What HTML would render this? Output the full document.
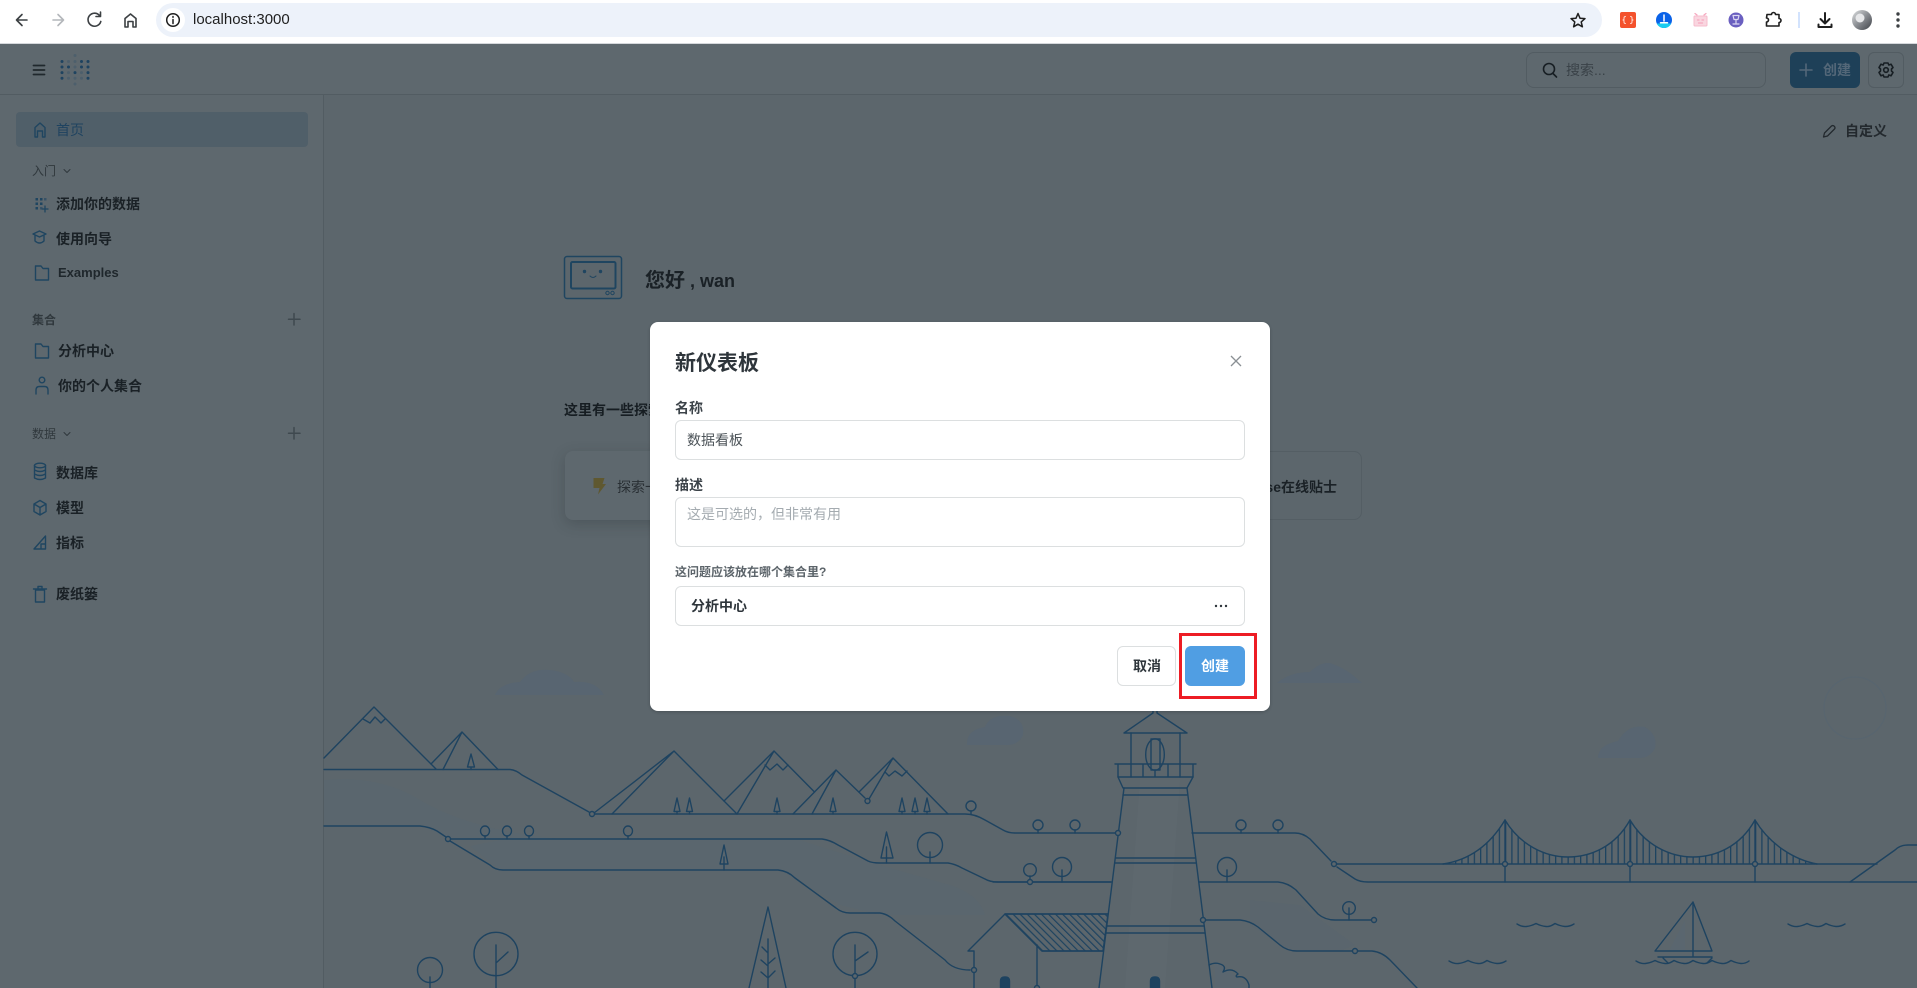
<!DOCTYPE html>
<html lang="zh"><head><meta charset="utf-8"><title>Metabase</title>
<style>
html,body{margin:0;padding:0;width:1917px;height:988px;overflow:hidden;background:#5c666c}
body{font-family:"Liberation Sans","Noto Sans CJK SC",sans-serif;position:relative}
.t{position:absolute;white-space:nowrap;line-height:20px;font-size:14px}
.b{font-weight:700}
.box{position:absolute;box-sizing:border-box}
svg{position:absolute;left:0;top:0}
</style></head><body>
<!-- page regions -->
<div class="box" style="left:0;top:44px;width:1917px;height:51px;background:#5e686e;border-bottom:1px solid #525c62"></div>
<div class="box" style="left:0;top:95px;width:324px;height:893px;background:#5e686e;border-right:1px solid #525c62"></div>
<div class="box" style="left:565px;top:451px;width:400px;height:69px;background:#5e686e;border-radius:8px;box-shadow:0 4px 14px rgba(30,38,44,.25)"></div>
<div class="box" style="left:975px;top:451px;width:387px;height:69px;border:1px solid #545e64;border-radius:8px"></div>

<!-- chrome -->
<div class="box" style="left:0;top:0;width:1917px;height:44px;background:#fff;border-bottom:1px solid #d5d8dc"></div>
<div class="box" style="left:156px;top:3px;width:1446px;height:34px;background:#edf2fa;border-radius:17px"></div>
<div class="box" style="left:161px;top:8px;width:24px;height:24px;background:#fff;border-radius:50%"></div>
<div class="t" style="left:193px;top:10px;color:#1f1f1f;font-size:15px">localhost:3000</div>

<!-- header -->
<div class="box" style="left:1526px;top:52px;width:240px;height:36px;border:1px solid #525c62;border-radius:8px"></div>
<div class="t" style="left:1566px;top:60px;color:#3a4248">搜索...</div>
<div class="box" style="left:1790px;top:52px;width:70px;height:36px;background:#1e4058;border-radius:6px"></div>
<div class="t b" style="left:1823px;top:60px;color:#536778">创建</div>
<div class="box" style="left:1868px;top:52px;width:36px;height:36px;border:1px solid #525c62;border-radius:6px"></div>
<div class="t b" style="left:1845px;top:121px;color:#23292e">自定义</div>

<!-- sidebar -->
<div class="box" style="left:16px;top:112px;width:292px;height:35px;background:#505f69;border-radius:4px"></div>
<div class="t" style="left:56px;top:120px;color:#1f4360">首页</div>
<div class="t" style="left:32px;top:161px;font-size:12px;color:#30383d">入门</div>
<div class="t b" style="left:56px;top:194px;color:#1a2126">添加你的数据</div>
<div class="t b" style="left:56px;top:229px;color:#1a2126">使用向导</div>
<div class="t b" style="left:58px;top:263px;color:#1f272c;font-size:13px">Examples</div>
<div class="t b" style="left:32px;top:310px;font-size:12px;color:#30383d">集合</div>
<div class="t b" style="left:58px;top:341px;color:#1a2126">分析中心</div>
<div class="t b" style="left:58px;top:376px;color:#1a2126">你的个人集合</div>
<div class="t" style="left:32px;top:424px;font-size:12px;color:#30383d">数据</div>
<div class="t b" style="left:56px;top:463px;color:#1a2126">数据库</div>
<div class="t b" style="left:56px;top:498px;color:#1a2126">模型</div>
<div class="t b" style="left:56px;top:533px;color:#1a2126">指标</div>
<div class="t b" style="left:56px;top:584px;color:#1a2126">废纸篓</div>

<!-- main -->
<div class="t b" style="left:645px;top:271px;font-size:20px;color:#1a2126">您好<span style="font-size:18px"> , wan</span></div>
<div class="t b" style="left:564px;top:400px;color:#161d22">这里有一些探索</div>
<div class="t" style="left:617px;top:477px;color:#292f34">探索一下</div>
<div class="t b" style="right:580px;top:477px;color:#1a2126;clip-path:inset(0 0 0 20px)">bhse在线贴士</div>

<svg width="1917" height="988" viewBox="0 0 1917 988" fill="none" stroke-linecap="round" stroke-linejoin="round">
<defs>
<pattern id="hang" patternUnits="userSpaceOnUse" x="1505" y="0" width="6.25" height="40"><rect x="0" y="0" width="1.3" height="40" fill="#1e4360"/></pattern>
<pattern id="hatch" patternUnits="userSpaceOnUse" width="5" height="5" patternTransform="rotate(-45 1005 914)"><rect x="0" y="0" width="1.2" height="5" fill="#1e4360"/></pattern>
<linearGradient id="av" x1="0" y1="0" x2="1" y2="1"><stop offset="0" stop-color="#dfe1e3"/><stop offset=".5" stop-color="#8a8d92"/><stop offset="1" stop-color="#3e4147"/></linearGradient>
</defs>

<!-- chrome icons -->
<g stroke="#3c4043" stroke-width="1.600">
<path d="M27 20H16.500M22 14.500L16.500 20L22 25.500"/>
<path d="M53 20H63.500M58 14.500L63.500 20L58 25.500" stroke="#b4b7bb"/>
<path d="M99.500 15.500A6.500 6.500 0 1 0 100.800 21.500M100.500 12V16.500H96"/>
<path d="M125 27V18.500L130.500 14L136 18.500V27H133V21.500H128V27Z"/>
<circle cx="173" cy="20" r="6.300" stroke="#1f1f1f" stroke-width="1.500"/>
<path d="M173 19.500V23.500M173 16.500V17.200" stroke="#1f1f1f" stroke-width="1.500"/>
<path d="M1578 13.500L1580 18.200L1585 18.600L1581.200 21.900L1582.400 26.800L1578 24.200L1573.600 26.800L1574.800 21.900L1571 18.600L1576 18.200Z" stroke="#1f1f1f" stroke-width="1.500"/>
<path d="M1767 14.500H1771.500A2 2 0 0 1 1775.500 14.500H1779V18.500A2 2 0 0 1 1779 22.500V26H1766.500V22A2 2 0 0 0 1766.500 18Z" stroke="#1f1f1f"/>
<path d="M1825 13V23M1820.500 19L1825 23.500L1829.500 19M1818.500 24.500V27H1831.500V24.500" stroke="#1f1f1f" stroke-width="2"/>
</g>
<rect x="1620" y="12" width="16" height="16" rx="2" fill="#f4522d"/>
<path d="M1625.500 16.500Q1624 16.500 1624 18V19.500L1623 20L1624 20.500V22Q1624 23.500 1625.500 23.500M1630.500 16.500Q1632 16.500 1632 18V19.500L1633 20L1632 20.500V22Q1632 23.500 1630.500 23.500" stroke="#ffd9cf"/>
<circle cx="1664" cy="20" r="8" fill="#0a62e8"/><path d="M1656.800 23.500A8 8 0 0 0 1671.200 23.500Z" fill="#19cdf0"/>
<path d="M1664 15V21M1660.500 22.800H1667.500" stroke="#fff" stroke-width="1.500"/>
<rect x="1694" y="16" width="13" height="10" rx="1" fill="#f9d6e0" stroke="#f6bccd"/><path d="M1697 15L1695 13.500M1704 15L1706 13.500M1697.500 20H1699M1702 20H1703.500M1698.500 23H1702.500" stroke="#f6a8bf" stroke-width="1.300"/>
<circle cx="1736" cy="20" r="7.500" fill="#6a5fc0"/><path d="M1733 15.500H1739L1738 19.500H1734ZM1736 20V23M1733 24H1739" stroke="#dcd8f2" stroke-width="1.200"/>
<rect x="1798" y="12" width="2" height="16" fill="#d3e3fd"/>
<circle cx="1862" cy="20" r="10" fill="url(#av)"/>
<circle cx="1860" cy="18" r="4.500" fill="#e6e7e9"/>
<g fill="#3c4043"><circle cx="1898" cy="14" r="1.700"/><circle cx="1898" cy="20" r="1.700"/><circle cx="1898" cy="26" r="1.700"/></g>

<!-- header left -->
<path d="M33.500 65.500H44.500M33.500 70H44.500M33.500 74.500H44.500" stroke="#20282d" stroke-width="1.800"/>
<g fill="#1e4360">
<circle cx="62" cy="61.500" r="1.500"/><circle cx="62" cy="67" r="1.500"/><circle cx="62" cy="72.600" r="1.500"/><circle cx="62" cy="78.300" r="1.500"/>
<circle cx="88" cy="61.500" r="1.500"/><circle cx="88" cy="67" r="1.500"/><circle cx="88" cy="72.600" r="1.500"/><circle cx="88" cy="78.300" r="1.500"/>
<circle cx="68.500" cy="67" r="1.500"/><circle cx="81.500" cy="67" r="1.500"/><circle cx="75" cy="72.600" r="1.500"/><circle cx="81.500" cy="61.500" r="1.500"/>
</g>
<g fill="#4d5f6c">
<circle cx="75" cy="55.500" r="1.500"/><circle cx="75" cy="61.500" r="1.500"/><circle cx="68.500" cy="61.500" r="1.500"/><circle cx="75" cy="67" r="1.500"/>
<circle cx="68.500" cy="72.600" r="1.500"/><circle cx="81.500" cy="72.600" r="1.500"/><circle cx="68.500" cy="78.300" r="1.500"/><circle cx="75" cy="78.300" r="1.500"/><circle cx="81.500" cy="78.300" r="1.500"/><circle cx="75" cy="84" r="1.500"/>
</g>

<!-- header right -->
<circle cx="1549" cy="69" r="5.500" stroke="#171e23" stroke-width="1.600"/><path d="M1553 73.500L1556.500 77" stroke="#171e23" stroke-width="1.600"/>
<path d="M1806 64V76M1800 70H1812" stroke="#536778" stroke-width="1.600"/>
<path d="M1884 63H1888L1888.800 65L1891 64.200L1893 67.500L1891.500 69V71L1893 72.500L1891 75.800L1888.800 75L1888 77H1884L1883.200 75L1881 75.800L1879 72.500L1880.500 71V69L1879 67.500L1881 64.200L1883.200 65Z" stroke="#171e23" stroke-width="1.600"/><circle cx="1886" cy="70" r="2.300" stroke="#171e23" stroke-width="1.600"/>
<path d="M1823.500 137L1824.500 133L1831.500 126Q1833 125 1834.500 126.500Q1835.500 128 1834.500 129L1827.500 136Z" stroke="#23292e" stroke-width="1.300"/>

<!-- sidebar icons -->
<g stroke="#1f4560" stroke-width="1.400">
<path d="M35 137V127.500L40 123L45 127.500V137H42.500V131H37.500V137Z"/>
<path d="M64 169.500L67 172.500L70 169.500" stroke="#30383d" stroke-width="1"/>
<path d="M64 432.500L67 435.500L70 432.500" stroke="#30383d" stroke-width="1"/>
<path d="M45 206V212M42 209H48" stroke-width="1.300"/>
<path d="M33 234L39.500 231L46 234L39.500 237ZM35 236V241Q39.500 245 44 241V236"/>
<path d="M35.500 266H41L43 268.500H48.500V280H35.500Z"/>
<path d="M35.500 344H41L43 346.500H48.500V358H35.500Z"/>
<circle cx="42" cy="380" r="2.800"/><path d="M36 394V390Q36 386.500 39.500 386.500H44.500Q48 386.500 48 390V394"/>
<ellipse cx="40" cy="465.500" rx="5.500" ry="2.300"/><path d="M34.500 465.500V478Q40 481 45.500 478V465.500M34.500 470Q40 473 45.500 470M34.500 474Q40 477 45.500 474"/>
<path d="M40 500.500L46 504V511.500L40 515L34 511.500V504ZM34 504L40 507.500L46 504M40 507.500V515"/>
<path d="M45.500 536V549H34ZM41 549V544H45.500"/>
<path d="M35.500 590H44.500V602H35.500ZM33.500 589H46.500M38 589V586.500H42V589"/>
</g>
<g fill="#1f4560">
<rect x="35.500" y="198" width="2.500" height="2.500"/><rect x="40" y="198" width="2.500" height="2.500"/><rect x="44" y="198" width="2.500" height="2.500" opacity=".6"/>
<rect x="35.500" y="202.500" width="2.500" height="2.500"/><rect x="40" y="202.500" width="2.500" height="2.500"/>
<rect x="35.500" y="207" width="2.500" height="2.500"/><rect x="40" y="207" width="2.500" height="2.500" opacity=".6"/>
</g>
<path d="M294 313.500V325M288.500 319.300H300M294 427.500V439M288.500 433.300H300" stroke="#3f494f" stroke-width="1.500"/>

<!-- greeting icon -->
<g stroke="#1f4560" stroke-width="1.500">
<rect x="564.500" y="256.500" width="57" height="42" rx="2.500"/>
<rect x="571" y="262" width="44.500" height="26.500" rx="1.500" stroke-width="2"/>
<path d="M590 276Q593 279 596 276" stroke-width="1"/>
<circle cx="607.500" cy="293" r="1.700" stroke-width="1"/><circle cx="612.500" cy="293" r="1.700" stroke-width="1"/>
</g>
<circle cx="584.500" cy="271.500" r="1.700" fill="#1f4560"/><circle cx="600.500" cy="271.500" r="1.700" fill="#1f4560"/>
<path d="M593.500 478H604.500L602.500 484H606L598 494.500L599.500 488H593.500Z" fill="#5f5830"/>

<!-- illustration: faint -->
<g fill="#586571" stroke="none">
<path d="M495 695Q500 683 520 682Q530 668 550 670Q568 672 574 682Q596 680 604 695Z"/>
<path d="M967 745Q966 730 985 727Q990 714 1010 716Q1025 720 1023 735Q1018 746 1005 745Z"/>
<path d="M1277 683Q1290 672 1310 672Q1320 662 1330 663Q1345 668 1355 677L1362 683Z"/>
<path d="M1598 758Q1598 745 1618 741Q1628 724 1645 727Q1658 735 1655 748Q1650 758 1640 758Z"/>
<path d="M324 780Q380 775 420 800Q470 830 560 839H448L423 826H324Z" opacity=".45"/>
<path d="M500 840H800Q860 860 950 885Q980 895 985 915H880L840 905L780 870H500L470 846Z" opacity=".45"/>
<path d="M1140 780H1180L1165 988H1125Z" opacity=".4" fill="#626c72"/>
<path d="M1215 960L1250 988H1215Z" opacity=".6"/>
<path d="M1250 900L1300 905L1355 945L1340 951H1290L1250 925Z" opacity=".4"/>
<path d="M1669 951L1685 920V951Z" opacity=".6"/>
</g>
<circle cx="1855" cy="708" r="31" stroke="#58656f" stroke-width="1.200"/>

<!-- illustration lines -->
<g stroke="#1e4360" stroke-width="1.400">
<!-- line 1 -->
<path d="M324 769.500H510Q516 770 522 775L589 812"/>
<path d="M324 758L374 707L436 769M363 719L370 723L375 717L381 723L385 719"/>
<path d="M431 764L462 732L498 769.500M462 732L443 769.500"/>
<path d="M471 754L467.500 767H474.500ZM471 767V769.500"/>
<!-- line 2 -->
<path d="M595 814H965Q975 814 985 820L1003 830Q1008 833 1015 833H1115"/>
<path d="M594 813L674 751L737 814M674 751L612 814"/>
<path d="M724 801L774 751L814.500 792M774 751L737 814"/>
<path d="M765 765L770 770L777 764L783 770L788 765"/>
<path d="M793 814L836 770L865 798M836 770L812 814"/>
<path d="M859 792L893 758L948 814M893 758L869 799"/>
<path d="M885 772L889 776L895 771L902 776L907 771"/>
<g>
<path d="M677 798L674 811.500H680ZM677 811.500V814"/>
<path d="M689.500 798L686.500 811.500H692.500ZM689.500 811.500V814"/>
<path d="M777 798L774 811.500H780ZM777 811.500V814"/>
<path d="M833 798L830 811.500H836ZM833 811.500V814"/>
<path d="M902 798L899 811.500H905ZM902 811.500V814"/>
<path d="M915 798L912 811.500H918ZM915 811.500V814"/>
<path d="M927 798L924 811.500H930ZM927 811.500V814"/>
</g>
<circle cx="971" cy="806" r="5"/><path d="M971 811V814"/>
<circle cx="1038" cy="825" r="5"/><path d="M1038 830V833"/>
<circle cx="1075" cy="825" r="5"/><path d="M1075 830V833"/>
<!-- line 3 -->
<path d="M324 826H420Q430 827 437 831L446 837"/>
<path d="M451 839H822Q830 840 838 845L868 861Q872 863 880 863H948Q955 864 962 868L985 879Q990 882 998 882H1111"/>
<ellipse cx="485" cy="831" rx="4.500" ry="5"/><path d="M485 836V839"/>
<ellipse cx="507" cy="831" rx="4.500" ry="5"/><path d="M507 836V839"/>
<ellipse cx="529" cy="831" rx="4.500" ry="5"/><path d="M529 836V839"/>
<ellipse cx="628" cy="831" rx="4.500" ry="5"/><path d="M628 836V839"/>
<path d="M886.500 832L881 858H893ZM886.500 847V863"/>
<circle cx="930" cy="845" r="12.500"/><path d="M930 852V863"/>
<!-- line 4 -->
<path d="M450 841L490 865Q495 870 503 870H778Q788 871 795 878L836 908Q842 913 850 913H880Q888 914 895 921L945 960Q953 970 970 970"/>
<path d="M724 845L720 864H728ZM724 857V870"/>
<!-- bottom-left trees -->
<ellipse cx="430" cy="970" rx="12.500" ry="12.500"/><path d="M430 977V988"/>
<ellipse cx="496" cy="954" rx="22" ry="21.700"/><path d="M496 945V988M496 963L508 952"/>
<path d="M749 988L768 907L786 988M768 939V988M768 953L762 947M768 966L761 960M768 978L761 972M768 964L775 958M768 978L775 971"/>
<ellipse cx="855" cy="954" rx="22" ry="21.700"/><path d="M855 945V988M855 961L868 952"/>
<!-- lighthouse -->
<path d="M1124 733L1153 713V710M1187 733L1157 713V710M1124 733H1187"/>
<path d="M1131 733V777M1180 733V777"/>
<ellipse cx="1155" cy="754.500" rx="9.300" ry="15.700"/>
<path d="M1151 739H1160V770H1151Z"/>
<path d="M1115 764H1196M1118 764V777H1193V764M1143 764V777M1155 770V777M1168 764V777"/>
<path d="M1118 777L1123 788H1187L1193 777M1123 795H1187"/>
<path d="M1124 788L1099 988M1187 788L1212 988"/>
<path d="M1116 858H1195M1115 863H1196M1107 926H1204M1106 933H1205"/>
<!-- house -->
<path d="M1005 914L968 951H974M1005 914H1108M1005 914L1042 951H1103M974 951V988M1037 945V988"/>
<path d="M1005 914H1108L1103 951H1042Z" fill="url(#hatch)"/>
<path d="M1000.500 988V981Q1000.500 977 1005 977Q1009.500 977 1009.500 981V988ZM1150.500 988V981Q1150.500 977 1155 977Q1159.500 977 1159.500 981V988Z" fill="#1e4360"/>
<!-- bush -->
<path d="M1209 965Q1215 962 1220 964Q1227 966 1223 972Q1232 967 1238 974Q1235 976 1237 977Q1246 975 1249 985V988"/>
<!-- right side -->
<path d="M1192 833H1295Q1303 833 1310 839L1331 861"/>
<circle cx="1241" cy="825" r="5"/><path d="M1241 830V833"/>
<circle cx="1278" cy="825" r="5"/><path d="M1278 830V833"/>
<path d="M1337 867L1355 879Q1360 882 1368 882H1917"/>
<path d="M1337 864H1877"/>
<path d="M993 882H1111M1199 882H1278Q1288 883 1296 890L1318 914Q1325 920 1335 920H1371"/>
<circle cx="1030" cy="870" r="6.300"/><path d="M1030 876V879"/>
<circle cx="1062" cy="867" r="9.500"/><path d="M1062 870V882"/>
<circle cx="1227" cy="867" r="9.500"/><path d="M1227 870V882"/>
<circle cx="1349" cy="908" r="6.300"/><path d="M1349 908V920"/>
<path d="M1206 920H1240Q1250 921 1258 927L1280 945Q1287 951 1297 951H1352M1358 951H1372Q1382 952 1390 960L1417 988"/>
<!-- bridge -->
<path d="M1443 864C1470 860 1490 845 1505 820C1520 845 1545 857 1568 857C1590 857 1615 847 1630 820C1645 845 1670 857 1693 857C1715 857 1740 847 1755 820C1770 845 1795 860 1817 864Z" fill="url(#hang)" stroke="none"/>
<path d="M1443 864C1470 860 1490 845 1505 820C1520 845 1545 857 1568 857C1590 857 1615 847 1630 820C1645 845 1670 857 1693 857C1715 857 1740 847 1755 820C1770 845 1795 860 1817 864"/>
<path d="M1505 820V861M1505 867V882M1630 820V861M1630 867V882M1755 820V861M1755 867V882"/>
<path d="M1850 882L1895 850Q1900 845 1908 845H1917"/>
<!-- boat -->
<path d="M1693 902V957M1655 951L1693 902L1712 951ZM1658 957H1712M1663 958L1668 963M1707 963L1712 958"/>
<!-- waves -->
<path d="M1517 924Q1522 927 1526.500 926.500Q1531 926 1536 923.500Q1541 926 1546 926.500Q1550 927 1555 923.500Q1560 926 1565 926.500Q1570 926.500 1574 924"/>
<path d="M1788 924Q1793 927 1797.500 926.500Q1802 926 1807 923.500Q1812 926 1817 926.500Q1821 927 1826 923.500Q1831 926 1836 926.500Q1841 926.500 1845 924"/>
<path d="M1449 961Q1454 964 1458.500 963.500Q1463 963 1468 960.500Q1473 963 1478 963.500Q1482 964 1487 960.500Q1492 963 1497 963.500Q1502 963.500 1506 961"/>
<path d="M1636 961Q1641 964 1645.500 963.500Q1650 963 1655 960.500Q1660 963 1665 963.500Q1669 964 1674 960.500Q1679 963 1684 963.500Q1688 964 1693 960.500Q1698 963 1703 963.500Q1707 964 1712 960.500Q1717 963 1722 963.500Q1726 964 1731 960.500Q1736 963 1741 963.500Q1746 963.500 1749 961"/>
<!-- nodes -->
<g fill="#5c666c">
<circle cx="592" cy="814" r="2.500"/><circle cx="867.500" cy="801" r="2.500"/><circle cx="448" cy="839" r="2.500"/>
<circle cx="1118" cy="833" r="2.500"/><circle cx="1030" cy="882" r="2.500"/><circle cx="1203" cy="920" r="2.500"/>
<circle cx="1334" cy="864" r="2.500"/><circle cx="1374" cy="920" r="2.500"/><circle cx="1355" cy="951" r="2.500"/>
<circle cx="974" cy="970" r="2.500"/><circle cx="855" cy="976" r="2.500"/><circle cx="1037" cy="988" r="2.500"/>
<circle cx="1505" cy="864" r="2.500"/><circle cx="1630" cy="864" r="2.500"/><circle cx="1755" cy="864" r="2.500"/>
</g>
</g>
</svg>

<!-- modal -->
<div class="box" style="left:650px;top:322px;width:620px;height:389px;background:#fff;border-radius:8px;box-shadow:0 1px 3px rgba(0,0,0,.2)"></div>
<div class="t b" style="left:675px;top:350px;line-height:28px;font-size:21px;color:#2e353b">新仪表板</div>
<svg width="1917" height="988" viewBox="0 0 1917 988" fill="none" style="pointer-events:none">
<path d="M1231 356L1241 366M1241 356L1231 366" stroke="#8a9094" stroke-width="1.300"/>
<g fill="#2e353b"><circle cx="1216" cy="606" r="1.200"/><circle cx="1221" cy="606" r="1.200"/><circle cx="1226" cy="606" r="1.200"/></g>
</svg>
<div class="t b" style="left:675px;top:398px;color:#3c4349">名称</div>
<div class="box" style="left:675px;top:420px;width:570px;height:40px;border:1px solid #dcdfe0;border-radius:6px"></div>
<div class="t" style="left:687px;top:430px;color:#4c5358">数据看板</div>
<div class="t b" style="left:675px;top:475px;color:#3c4349">描述</div>
<div class="box" style="left:675px;top:497px;width:570px;height:50px;border:1px solid #dcdfe0;border-radius:6px"></div>
<div class="t" style="left:687px;top:504px;color:#a4abb0">这是可选的，但非常有用</div>
<div class="t b" style="left:675px;top:562px;font-size:12px;color:#5c646a">这问题应该放在哪个集合里?</div>
<div class="box" style="left:675px;top:586px;width:570px;height:40px;border:1px solid #dcdfe0;border-radius:6px"></div>
<div class="t b" style="left:691px;top:596px;color:#2e353b">分析中心</div>
<div class="box" style="left:1117px;top:646px;width:59px;height:40px;border:1px solid #dcdfe0;border-radius:6px"></div>
<div class="t b" style="left:1133px;top:656px;color:#2e353b">取消</div>
<div class="box" style="left:1185px;top:646px;width:60px;height:40px;background:#509ee3;border-radius:6px"></div>
<div class="t b" style="left:1201px;top:656px;color:#fff">创建</div>
<div class="box" style="left:1179px;top:633px;width:78px;height:66px;border:3px solid #ed1c24"></div>
</body></html>
